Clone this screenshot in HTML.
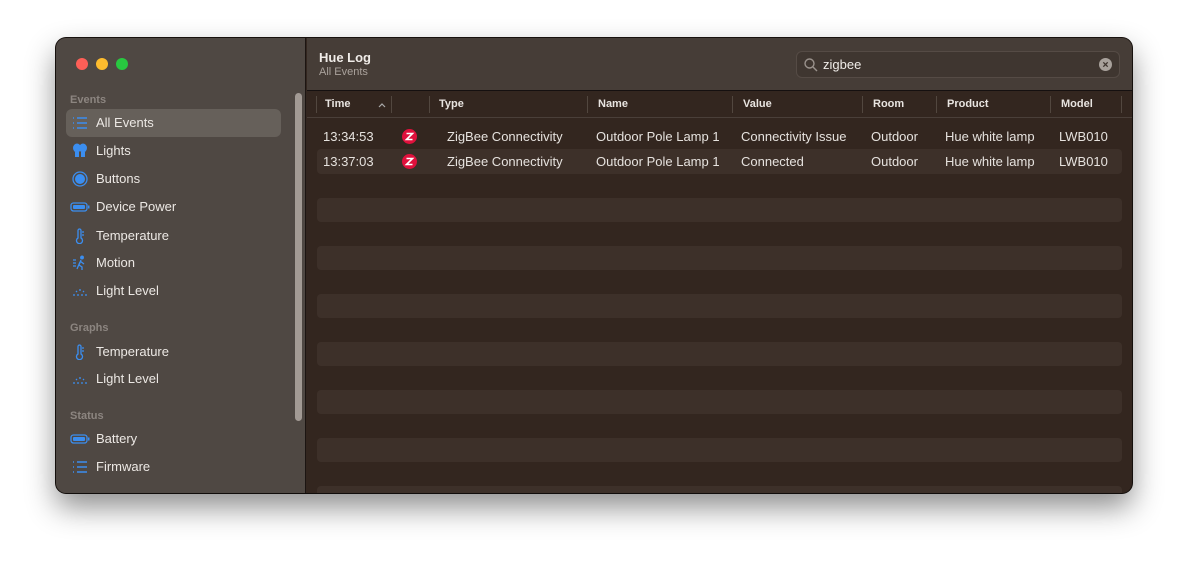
<!DOCTYPE html>
<html><head><meta charset="utf-8"><style>
*{margin:0;padding:0;box-sizing:border-box}
body{width:1188px;height:568px;background:#fff;font-family:"Liberation Sans",sans-serif;position:relative;overflow:hidden}
.win{position:absolute;left:56px;top:38px;width:1076px;height:455px;border-radius:10px;overflow:hidden;background:#33261f;box-shadow:0 14px 30px rgba(0,0,0,.45),0 0 0 1px #1a1410}
.side{position:absolute;left:0;top:0;width:250px;height:100%;background:#4f4843;border-right:1px solid #1c1512}
.dot{position:absolute;top:20px;width:12px;height:12px;border-radius:50%}
.sec{position:absolute;left:14px;font-size:11px;font-weight:bold;color:#8c8580}
.it{position:absolute;left:10px;width:215px;height:28px;border-radius:6px;font-size:13px;color:#ece8e4;line-height:28px;padding-left:30px}
.it svg{position:absolute;left:6px;top:6px}
.sel{background:#66605a}
.scroll{position:absolute;left:239px;top:55px;width:7px;height:328px;border-radius:4px;background:#a29a94}
.tb{position:absolute;left:251px;top:0;right:0;height:53px;background:#463d37;border-bottom:1px solid #151010}
.title{position:absolute;left:12px;top:12px;font-size:13px;font-weight:bold;color:#f0ece8}
.sub{position:absolute;left:12px;top:28px;font-size:11px;color:#aaa29c}
.search{position:absolute;left:489px;top:13px;width:324px;height:27px;border-radius:6px;border:1px solid #554b45;background:#3f3630;color:#f0ece8;font-size:13px;line-height:26px;padding-left:26px}
.hdr{position:absolute;left:251px;top:54px;right:0;height:26px;border-bottom:1px solid #4a3f39;font-size:11px;font-weight:bold;color:#e8e4e0}
.hdr span{position:absolute;top:6px}
.hdr i{position:absolute;top:4px;width:1px;height:17px;background:#52473f}
.row{position:absolute;left:261px;width:805px;height:25px;font-size:13px;color:#e6e2de;line-height:25px;border-radius:4px}
.row span{position:absolute}
.str{position:absolute;left:261px;width:805px;height:24px;border-radius:4px;background:#3d3029}
.z{position:absolute;left:85px;top:5px;width:15px;height:15px}
</style></head><body>
<div class="win">
 <div class="side">
  <div class="dot" style="left:20px;background:#fe5f57"></div>
  <div class="dot" style="left:40px;background:#febc2e"></div>
  <div class="dot" style="left:60px;background:#28c840"></div>
  <div class="sec" style="top:56px">Events</div>
  <div class="it sel" style="top:71px"><svg width="16" height="16" stroke="#3b8ef0" stroke-width="1.4"><path d="M1 3h1M5 3h10M1 8h1M5 8h10M1 13h1M5 13h10"/></svg>All Events</div>
  <div class="it" style="top:99px"><svg width="16" height="16" fill="#3b8ef0"><ellipse cx="5" cy="5" rx="4" ry="4.5"/><ellipse cx="11" cy="5" rx="4" ry="4.5"/><rect x="3" y="9" width="4" height="5"/><rect x="9" y="9" width="4" height="5"/></svg>Lights</div>
  <div class="it" style="top:127px"><svg width="16" height="16"><circle cx="8" cy="8" r="7" fill="none" stroke="#3b8ef0" stroke-width="1.3"/><circle cx="8" cy="8" r="5" fill="#3b8ef0"/></svg>Buttons</div>
  <div class="it" style="top:155px"><svg width="20" height="16" style="left:4px"><rect x="1" y="4" width="16" height="8" rx="2.5" fill="none" stroke="#3b8ef0" stroke-width="1.3"/><rect x="3" y="6" width="12" height="4" rx="1" fill="#3b8ef0"/><rect x="18" y="6.5" width="1.5" height="3" fill="#3b8ef0"/></svg>Device Power</div>
  <div class="it" style="top:184px"><svg width="16" height="16" fill="none" stroke="#3b8ef0" stroke-width="1.3"><path d="M6 10V2.5a1.5 1.5 0 013 0V10a3 3 0 11-3 0z"/><path d="M10 4h2M10 7h2"/></svg>Temperature</div>
  <div class="it" style="top:211px"><svg width="16" height="16" fill="none" stroke="#3b8ef0" stroke-width="1.3"><circle cx="10" cy="2.5" r="1.3" fill="#3b8ef0"/><path d="M9 5l-2 5 3 2v3M8 7l-3 7M8 6l4 3M1 5h3M1 8h3M1 11h3"/></svg>Motion</div>
  <div class="it" style="top:239px"><svg width="16" height="16" stroke="#3b8ef0" stroke-width="1.3"><path d="M1 12h2M5 12h2M9 12h2M13 12h2M8 6v2M4 8l1 1M12 8l-1 1"/></svg>Light Level</div>
  <div class="sec" style="top:284px">Graphs</div>
  <div class="it" style="top:300px"><svg width="16" height="16" fill="none" stroke="#3b8ef0" stroke-width="1.3"><path d="M6 10V2.5a1.5 1.5 0 013 0V10a3 3 0 11-3 0z"/><path d="M10 4h2M10 7h2"/></svg>Temperature</div>
  <div class="it" style="top:327px"><svg width="16" height="16" stroke="#3b8ef0" stroke-width="1.3"><path d="M1 12h2M5 12h2M9 12h2M13 12h2M8 6v2M4 8l1 1M12 8l-1 1"/></svg>Light Level</div>
  <div class="sec" style="top:372px">Status</div>
  <div class="it" style="top:387px"><svg width="20" height="16" style="left:4px"><rect x="1" y="4" width="16" height="8" rx="2.5" fill="none" stroke="#3b8ef0" stroke-width="1.3"/><rect x="3" y="6" width="12" height="4" rx="1" fill="#3b8ef0"/><rect x="18" y="6.5" width="1.5" height="3" fill="#3b8ef0"/></svg>Battery</div>
  <div class="it" style="top:415px"><svg width="16" height="16" stroke="#3b8ef0" stroke-width="1.4"><path d="M1 3h1M5 3h10M1 8h1M5 8h10M1 13h1M5 13h10"/></svg>Firmware</div>
  <div class="scroll"></div>
 </div>
 <div class="tb">
  <div class="title">Hue Log</div>
  <div class="sub">All Events</div>
  <div class="search"><svg width="14" height="14" style="position:absolute;left:7px;top:6px" fill="none" stroke="#9a928c" stroke-width="1.4"><circle cx="5.5" cy="5.5" r="4.5"/><path d="M9 9l4 4"/></svg>zigbee<svg width="13" height="13" style="position:absolute;right:7px;top:6px"><circle cx="6.5" cy="6.5" r="6.5" fill="#a8a19b"/><path d="M4.3 4.3l4.4 4.4M8.7 4.3l-4.4 4.4" stroke="#3f3630" stroke-width="1.3"/></svg></div>
 </div>
 <div class="hdr">
  <i style="left:9px"></i><span style="left:18px">Time</span><svg width="8" height="6" style="position:absolute;left:71px;top:10px" fill="none" stroke="#aaa" stroke-width="1.2"><path d="M1 5l3-3 3 3"/></svg>
  <i style="left:84px"></i><i style="left:122px"></i><span style="left:132px">Type</span>
  <i style="left:280px"></i><span style="left:291px">Name</span>
  <i style="left:425px"></i><span style="left:436px">Value</span>
  <i style="left:555px"></i><span style="left:566px">Room</span>
  <i style="left:629px"></i><span style="left:640px">Product</span>
  <i style="left:743px"></i><span style="left:754px">Model</span>
  <i style="left:814px"></i>
 </div>
 <div class="row" style="top:86px"><span style="left:6px">13:34:53</span><svg class="z"><circle cx="7.5" cy="7.5" r="7.5" fill="#e0103c"/><path d="M4.5 4.5h6l-6 6h6" fill="none" stroke="#fff" stroke-width="1.6"/></svg><span style="left:130px">ZigBee Connectivity</span><span style="left:279px">Outdoor Pole Lamp 1</span><span style="left:424px">Connectivity Issue</span><span style="left:554px">Outdoor</span><span style="left:628px">Hue white lamp</span><span style="left:742px">LWB010</span></div>
 <div class="row" style="top:111px;background:#3d3029"><span style="left:6px">13:37:03</span><svg class="z"><circle cx="7.5" cy="7.5" r="7.5" fill="#e0103c"/><path d="M4.5 4.5h6l-6 6h6" fill="none" stroke="#fff" stroke-width="1.6"/></svg><span style="left:130px">ZigBee Connectivity</span><span style="left:279px">Outdoor Pole Lamp 1</span><span style="left:424px">Connected</span><span style="left:554px">Outdoor</span><span style="left:628px">Hue white lamp</span><span style="left:742px">LWB010</span></div>
 <div class="str" style="top:160px"></div>
 <div class="str" style="top:208px"></div>
 <div class="str" style="top:256px"></div>
 <div class="str" style="top:304px"></div>
 <div class="str" style="top:352px"></div>
 <div class="str" style="top:400px"></div>
 <div class="str" style="top:448px"></div>
</div>
</body></html>
